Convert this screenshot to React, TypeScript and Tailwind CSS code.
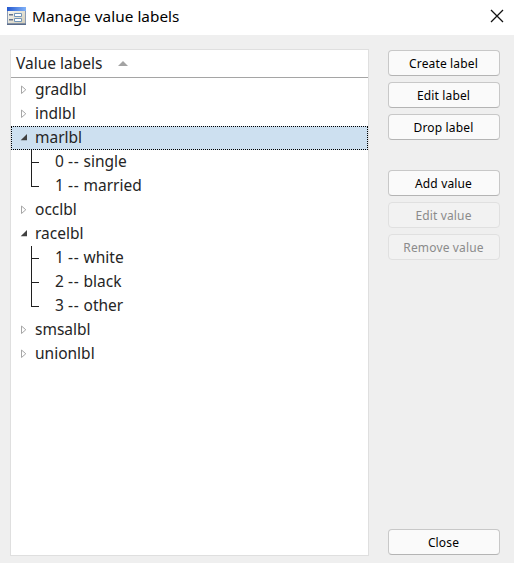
import React from "react";

type Item = { name: string; values?: [string, string][]; selected?: boolean };

const items: Item[] = [
  { name: "gradlbl" },
  { name: "indlbl" },
  { name: "marlbl", values: [["0", "single"], ["1", "married"]], selected: true },
  { name: "occlbl" },
  { name: "racelbl", values: [["1", "white"], ["2", "black"], ["3", "other"]] },
  { name: "smsalbl" },
  { name: "unionlbl" },
];

function FormIcon() {
  return (
    <svg width="19" height="18" viewBox="0 0 19 18">
      <defs>
        <linearGradient id="bar" x1="0" x2="1">
          <stop offset="0" stopColor="#2558cf" />
          <stop offset="1" stopColor="#80b2f8" />
        </linearGradient>
        <linearGradient id="body" x1="0" y1="0" x2="1" y2="1">
          <stop offset="0" stopColor="#f6f6f0" />
          <stop offset="1" stopColor="#d3cdb9" />
        </linearGradient>
      </defs>
      <path d="M0 0h19v18H0z" fill="#8a9bb5" />
      <path d="M1 4h17v12.5H1z" fill="url(#body)" />
      <path d="M0 0h19v4H0z" fill="url(#bar)" />
      <path d="M0 16.5h19V18H0z" fill="#5a6c8b" />
      <path d="M2 7h4v1.5H2zM2 12h4v1.5H2z" fill="#66758e" />
      <path d="M7.5 6.5h7v3h-7zM7.5 11.5h7v3h-7z" fill="#fff" stroke="#7094b8" />
    </svg>
  );
}

function Arrow({ open }: { open: boolean }) {
  return (
    <svg width="8" height="10" viewBox="0 0 8 10" className="shrink-0">
      {open ? (
        <path d="M7 1v6.3H.7z" fill="#404040" />
      ) : (
        <path d="M1.5 1v7.5L5.8 4.75z" fill="#fff" stroke="#a6a6a6" />
      )}
    </svg>
  );
}

function Value({ code, text, last }: { code: string; text: string; last: boolean }) {
  return (
    <div className="flex h-6 items-center pl-5">
      <svg width="8" height="24" viewBox="0 0 8 24" shapeRendering="crispEdges" className="mr-4 shrink-0">
        <path d={last ? "M0 0h1v12h7v1H0z" : "M0 0h1v12h7v1H1v11H0z"} fill="#202020" />
      </svg>
      <span className="whitespace-pre pb-0.5">
        {code} <span className="tracking-[0.8px]">--</span> {text}
      </span>
    </div>
  );
}

function Button({ label, disabled = false }: { label: string; disabled?: boolean }) {
  return (
    <button
      disabled={disabled}
      className={
        "flex h-[26px] w-28 shrink-0 items-center justify-center rounded border pt-0.5 pr-px text-[12px] leading-4 tracking-[0.15px] " +
        (disabled
          ? "border-[#e0e0e0] bg-[#f2f2f2] text-[#8b8b8b]"
          : "border-[#c8c8c8] border-b-[#b4b4b4] bg-[#fafafa] text-black")
      }
    >
      {label}
    </button>
  );
}

export default function App() {
  return (
    <div className="flex h-[563px] w-[514px] flex-col overflow-hidden bg-[#efefef] font-['Noto_Sans',sans-serif] text-[15.5px] leading-6 text-[#252525]">
      <header className="flex h-[35px] shrink-0 items-center bg-white pl-[7px] pr-[10px] pb-[3px] text-[15.3px] text-black">
        <FormIcon />
        <h1 className="ml-1.5 flex-1 tracking-[0.04px]">Manage value labels</h1>
        <svg width="14" height="14" viewBox="0 0 14 14">
          <path d="M1 1l12 12M13 1L1 13" fill="none" stroke="#111" strokeWidth="1.3" />
        </svg>
      </header>
      <main className="flex min-h-0 flex-1 gap-[19px] pt-[14px] pb-[7px] pl-[10px]">
        <section className="w-[359px] border border-[#dfdfdf] bg-white">
          <div className="flex h-7 items-center border-b border-[#a5a5a5] pl-[5px]">
            <span className="pb-0.5">Value labels</span>
            <svg width="10" height="6" viewBox="0 0 10 6" className="ml-4">
              <path d="M0 5l5-5 5 5z" fill="#a3a3a3" />
            </svg>
          </div>
          {items.map((item) => (
            <div key={item.name}>
              <div
                className={
                  "flex h-6 items-center border pl-2 " +
                  (item.selected ? "border-dotted border-black bg-[#cde0f0]" : "border-transparent")
                }
              >
                <Arrow open={!!item.values} />
                <span className="ml-[7px] pb-0.5">{item.name}</span>
              </div>
              {item.values?.map(([code, text], i) => (
                <Value key={code} code={code} text={text} last={i === item.values!.length - 1} />
              ))}
            </div>
          ))}
        </section>
        <aside className="flex flex-col pt-px">
          <div className="flex flex-col gap-1.5">
            <Button label="Create label" />
            <Button label="Edit label" />
            <Button label="Drop label" />
          </div>
          <div className="mt-[30px] flex flex-1 flex-col gap-1.5">
            <Button label="Add value" />
            <Button label="Edit value" disabled />
            <Button label="Remove value" disabled />
          </div>
          <div className="pb-px">
            <Button label="Close" />
          </div>
        </aside>
      </main>
    </div>
  );
}
